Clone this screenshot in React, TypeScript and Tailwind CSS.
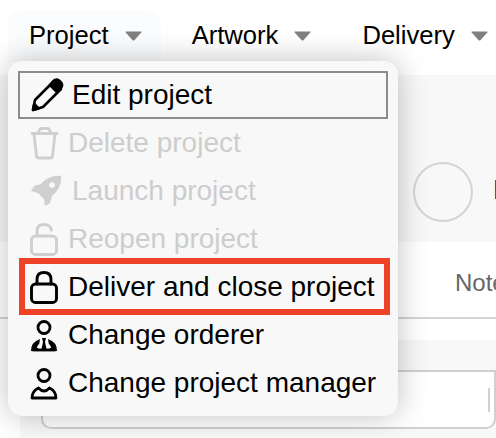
import React from "react";

const Caret = () => (
  <svg width="17" height="10" viewBox="0 0 17 10" className="block shrink-0">
    <path d="M1 0.5 H16 Q17 0.5 16.3 1.5 L9.6 9 Q8.5 10 7.4 9 L0.7 1.5 Q0 0.5 1 0.5 Z" fill="#808080" />
  </svg>
);

const Nav = ({ label, active }: { label: string; active?: boolean }) => (
  <div className={`flex h-[52px] items-center gap-[16px] pl-[21px] ${active ? "rounded-t-[14px] bg-[#fbfcfd] pr-[19px]" : "pr-[20px]"}`}>
    <span className="whitespace-nowrap text-[25.6px] leading-none text-black">{label}</span>
    <Caret />
  </div>
);

type IconProps = { color: string };
const Pencil = ({ color }: IconProps) => (
  <svg width="34" height="34" viewBox="0 0 34 34" fill="none" stroke={color} strokeWidth="2.6" strokeLinejoin="round" className="block shrink-0">
    <path d="M3 32 L5 22 L23 4 L31 11 L13 29 Z" />
    <path d="M23 3.5 Q26 0.5 29 2.5 L31.5 5 Q33 8 30.5 10.5 L27 14 L20 7 Z" fill={color} />
    <path d="M3 32 L4.2 26 L8.5 30.5 Z" fill={color} />
  </svg>
);
const Trash = ({ color }: IconProps) => (
  <svg width="30" height="34" viewBox="0 0 30 34" fill="none" stroke={color} strokeWidth="2.8" strokeLinejoin="round" strokeLinecap="round" className="block">
    <path d="M3 7.5 H28" />
    <path d="M9.5 7 Q10 2.5 13 2.5 H18 Q21 2.5 21.5 7" />
    <path d="M5 8 L7.5 30 Q7.8 32 10 32 H21 Q23.2 32 23.5 30 L26 8" />
  </svg>
);
const Rocket = ({ color }: IconProps) => (
  <svg width="32" height="32" viewBox="0 0 32 32" className="ml-[4px] block shrink-0">
    <path
      fillRule="evenodd"
      fill={color}
      d="M31 1 C24 0 16 3 11 9 L4 11 L1 16 L8 18 L14 24 L15 31 L20 28 L22 21 C28 16 32 9 31 1 Z M22 7 a3 3 0 1 0 .01 0 Z"
    />
  </svg>
);
const Lock = ({ color, open }: IconProps & { open?: boolean }) => (
  <svg width="30" height="34" viewBox="0 0 30 34" fill="none" stroke={color} strokeWidth="2.9" strokeLinecap="round" className="block">
    <rect x="2.5" y="14" width="25" height="18.5" rx="4" />
    {open ? <path d="M8 14 V9.5 Q8 2.5 15 2.5 Q21 2.5 22.5 8" /> : <path d="M8 14 V9.5 Q8 2.5 15 2.5 Q22 2.5 22 9.5 V14" />}
  </svg>
);
const Orderer = () => (
  <svg width="30" height="34" viewBox="0 0 30 34" fill="none" stroke="#000" strokeWidth="2.8" strokeLinejoin="round" className="block">
    <circle cx="15" cy="9.5" r="6" />
    <path fill="#000" stroke="none" d="M2 33 Q2 24 11 21 L9 33 Z M28 33 Q28 24 19 21 L21 33 Z M13 20 h4 L16 24 L18 33 h-6 L14 24 Z" />
    <path d="M3.5 32 H26.5" />
    <path fill="#f8f8f8" stroke="none" d="M9.5 26 L11.3 30 H7.7 Z M20.5 26 L22.3 30 H18.7 Z" />
  </svg>
);
const Manager = () => (
  <svg width="30" height="34" viewBox="0 0 30 34" fill="none" stroke="#000" strokeWidth="2.8" strokeLinejoin="round" className="block">
    <circle cx="15" cy="9.5" r="6" />
    <path d="M3 32 Q3 25 9.5 22 Q15 28 20.5 22 Q27 25 27 32 Z" />
  </svg>
);

const Row = ({ icon, label, muted, shift }: { icon: React.ReactNode; label: string; muted?: boolean; shift?: string }) => (
  <div className="flex h-[48px] items-center pl-[21px]">
    <span className="flex w-[30px] shrink-0 justify-center">{icon}</span>
    <span className={`${shift ?? "ml-[9px]"} whitespace-nowrap text-[28px] leading-none ${muted ? "text-[#cdcdcd]" : "text-black"}`}>{label}</span>
  </div>
);

export default function App() {
  const grey = "#cfcfcf";
  return (
    <div className="relative h-[438px] w-[496px] overflow-hidden bg-white font-['Liberation_Sans',Arial,sans-serif]">
      <div className="flex h-[75px] items-start pl-[8px] pt-[10px]">
        <Nav label="Project" active />
        <div className="ml-[10px]">
          <Nav label="Artwork" />
        </div>
        <div className="ml-[10px]">
          <Nav label="Delivery" />
        </div>
      </div>

      <div className="flex h-[167px] items-start bg-[#f8f8f8] pl-[413px] pt-[87px]">
        <div className="h-[60px] w-[60px] shrink-0 rounded-full border-2 border-[#d4d4d4]" />
        <span className="ml-[20px] mt-[14px] text-[28px] leading-none text-black">D</span>
      </div>

      <div className="flex h-[77px] items-center border-b-2 border-[#d4d4d4] pl-[455px] pt-[6px]">
        <span className="whitespace-nowrap text-[24px] leading-none text-[#666]">Notes</span>
      </div>
      <div className="h-[21px]" />
      <div className="ml-[20px] h-[98px] bg-[#f8f8f8] pt-[30px]">
        <div className="ml-[21px] flex h-[59px] items-center rounded-b-[10px] border-2 border-[#d0d0d0] bg-white pl-[445px]">
          <div className="h-[24px] w-[2px] bg-[#d0d0d0]" />
        </div>
      </div>

      <div className="absolute left-[8px] top-[61px] h-[355px] w-[390px] rounded-[14px] bg-[#f8f8f8] pt-[10px] shadow-[0_0_30px_rgba(0,0,0,0.25)]">
        <div className="mx-[10px] flex h-[48px] items-center border-2 border-[#8c8c8c] pl-[10px]">
          <Pencil color="#000" />
          <span className="ml-[8px] text-[28px] leading-none text-black">Edit project</span>
        </div>
        <Row icon={<Trash color={grey} />} label="Delete project" muted />
        <Row icon={<Rocket color={grey} />} label="Launch project" muted shift="ml-[13px]" />
        <Row icon={<Lock color={grey} open />} label="Reopen project" muted />
        <div className="relative">
          <Row icon={<Lock color="#000" />} label="Deliver and close project" />
          <div className="absolute left-[11px] top-[-5px] h-[57px] w-[371px] border-[6px] border-[#ee4326]" />
        </div>
        <Row icon={<Orderer />} label="Change orderer" />
        <Row icon={<Manager />} label="Change project manager" />
      </div>
    </div>
  );
}
